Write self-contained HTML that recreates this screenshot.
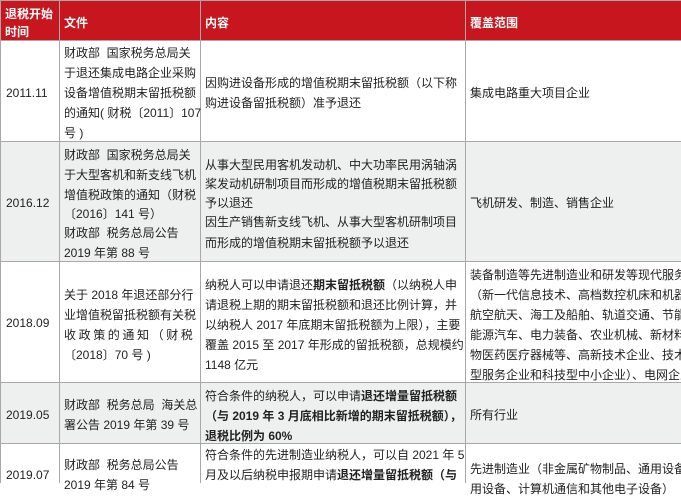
<!DOCTYPE html>
<html><head><meta charset="utf-8"><style>
body{margin:0;width:681px;height:483px;overflow:hidden;background:#fff;position:relative;font-family:"Liberation Sans","Noto Sans CJK SC",sans-serif;font-size:12px;color:#222}
.r{position:absolute;left:0;width:681px}
.v{position:absolute;top:0;height:483px;width:1px;background:#a8a8a8}
.h{position:absolute;left:0;width:681px;height:1px;background:#a8a8a8}
.t{position:absolute;white-space:nowrap;line-height:20px;height:20px}
.w{color:#fff;font-weight:bold;font-size:12px}
b{font-weight:bold}
</style></head><body>
<div class="r" style="top:0;height:40px;background:#c8161e"></div>
<div class="r" style="top:141px;height:121px;background:#eeefef"></div>
<div class="r" style="top:382px;height:61px;background:#eeefef"></div>
<div class="h" style="top:0"></div>
<div class="h" style="top:40px"></div>
<div class="h" style="top:141px"></div>
<div class="h" style="top:261px"></div>
<div class="h" style="top:382px"></div>
<div class="h" style="top:443px"></div>
<div class="v" style="left:0"></div>
<div class="v" style="left:59px"></div>
<div class="v" style="left:200px"></div>
<div class="v" style="left:465px"></div>

<div class="t w" style="left:5px;top:4px">退税开始</div>
<div class="t w" style="left:5px;top:22px">时间</div>
<div class="t w" style="left:64px;top:13px">文件</div>
<div class="t w" style="left:205px;top:13px">内容</div>
<div class="t w" style="left:470px;top:13px">覆盖范围</div>

<div class="t" style="left:6px;top:83px">2011.11</div>
<div class="t" style="left:64px;top:43px">财政部&nbsp; 国家税务总局关</div>
<div class="t" style="left:64px;top:63px">于退还集成电路企业采购</div>
<div class="t" style="left:64px;top:83px">设备增值税期末留抵税额</div>
<div class="t" style="left:64px;top:103px">的通知( 财税〔2011〕107</div>
<div class="t" style="left:64px;top:123px">号 )</div>
<div class="t" style="left:205px;top:73px">因购进设备形成的增值税期末留抵税额（以下称</div>
<div class="t" style="left:205px;top:93px">购进设备留抵税额）准予退还</div>
<div class="t" style="left:470px;top:83px">集成电路重大项目企业</div>

<div class="t" style="left:6px;top:193px">2016.12</div>
<div class="t" style="left:64px;top:145px">财政部&nbsp; 国家税务总局关</div>
<div class="t" style="left:64px;top:165px">于大型客机和新支线飞机</div>
<div class="t" style="left:64px;top:185px">增值税政策的通知（财税</div>
<div class="t" style="left:64px;top:204px">〔2016〕141 号）</div>
<div class="t" style="left:64px;top:223px">财政部&nbsp; 税务总局公告</div>
<div class="t" style="left:64px;top:243px">2019 年第 88 号</div>
<div class="t" style="left:205px;top:155px">从事大型民用客机发动机、中大功率民用涡轴涡</div>
<div class="t" style="left:205px;top:174px">桨发动机研制项目而形成的增值税期末留抵税额</div>
<div class="t" style="left:205px;top:193px">予以退还</div>
<div class="t" style="left:205px;top:212px">因生产销售新支线飞机、从事大型客机研制项目</div>
<div class="t" style="left:205px;top:233px">而形成的增值税期末留抵税额予以退还</div>
<div class="t" style="left:470px;top:193px">飞机研发、制造、销售企业</div>

<div class="t" style="left:6px;top:313px">2018.09</div>
<div class="t" style="left:64px;top:285px">关于 2018 年退还部分行</div>
<div class="t" style="left:64px;top:305px">业增值税留抵税额有关税</div>
<div class="t" style="left:64px;top:325px;letter-spacing:2.6px">收政策的通知（财税</div>
<div class="t" style="left:64px;top:345px">〔2018〕70 号 )</div>
<div class="t" style="left:205px;top:275px">纳税人可以申请退还<b>期末留抵税额</b>（以纳税人申</div>
<div class="t" style="left:205px;top:295px">请退税上期的期末留抵税额和退还比例计算，并</div>
<div class="t" style="left:205px;top:315px">以纳税人 2017 年底期末留抵税额为上限），主要</div>
<div class="t" style="left:205px;top:335px">覆盖 2015 至 2017 年形成的留抵税额，总规模约</div>
<div class="t" style="left:205px;top:355px">1148 亿元</div>
<div class="t" style="left:470px;top:265px">装备制造等先进制造业和研发等现代服务业</div>
<div class="t" style="left:470px;top:285px">（新一代信息技术、高档数控机床和机器人、</div>
<div class="t" style="left:470px;top:305px">航空航天、海工及船舶、轨道交通、节能与新</div>
<div class="t" style="left:470px;top:325px">能源汽车、电力装备、农业机械、新材料、生</div>
<div class="t" style="left:470px;top:345px">物医药医疗器械等、高新技术企业、技术先进</div>
<div class="t" style="left:470px;top:365px">型服务企业和科技型中小企业）、电网企业</div>

<div class="t" style="left:6px;top:405px">2019.05</div>
<div class="t" style="left:64px;top:395px">财政部&nbsp; 税务总局&nbsp; 海关总</div>
<div class="t" style="left:64px;top:415px">署公告 2019 年第 39 号</div>
<div class="t" style="left:205px;top:386px">符合条件的纳税人，可以申请<b>退还增量留抵税额</b></div>
<div class="t" style="left:205px;top:406px"><b>（与 2019 年 3 月底相比新增的期末留抵税额），</b></div>
<div class="t" style="left:205px;top:426px"><b>退税比例为 60%</b></div>
<div class="t" style="left:470px;top:405px">所有行业</div>

<div class="t" style="left:6px;top:465px">2019.07</div>
<div class="t" style="left:64px;top:455px">财政部&nbsp; 税务总局公告</div>
<div class="t" style="left:64px;top:475px">2019 年第 84 号</div>
<div class="t" style="left:205px;top:445px">符合条件的先进制造业纳税人，可以自 2021 年 5</div>
<div class="t" style="left:205px;top:465px">月及以后纳税申报期申请<b>退还增量留抵税额（与</b></div>
<div class="t" style="left:470px;top:459px">先进制造业（非金属矿物制品、通用设备、专</div>
<div class="t" style="left:470px;top:479px">用设备、计算机通信和其他电子设备）</div>
</body></html>
